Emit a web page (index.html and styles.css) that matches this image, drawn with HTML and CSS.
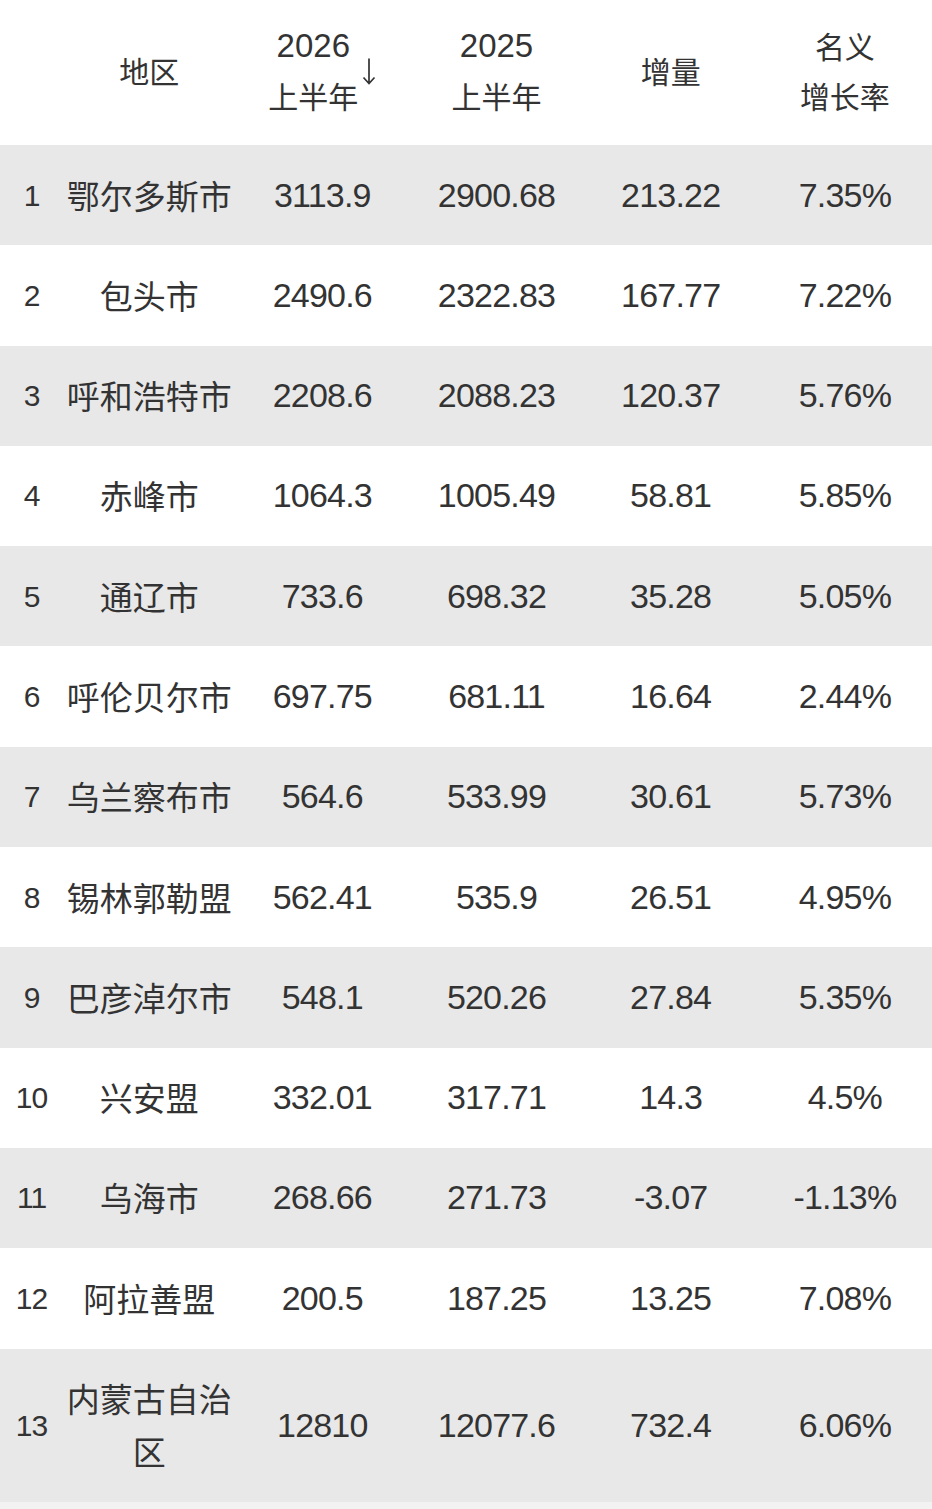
FILE: index.html
```html
<!DOCTYPE html>
<html lang="zh-CN">
<head>
<meta charset="utf-8">
<link rel="stylesheet" href="styles.css">
</head>
<body>
<table class="gdp">
  <colgroup>
    <col class="c-rank"><col class="c-name"><col class="c-num"><col class="c-num"><col class="c-num"><col class="c-num">
  </colgroup>
  <thead>
    <tr>
      <th></th>
      <th>地区</th>
      <th><div class="sort"><span class="hblock"><span class="hnum">2026</span><br>上半年</span><svg class="arrow" width="14" height="27" viewBox="0 0 14 27"><path d="M7 0.5V25.5M1.5 19.5L7 25.5L12.5 19.5" fill="none" stroke="#333" stroke-width="1.7"/></svg></div></th>
      <th><span class="hnum">2025</span><br>上半年</th>
      <th>增量</th>
      <th>名义<br>增长率</th>
    </tr>
  </thead>
  <tbody>
    <tr><td class="rank">1</td><td class="name">鄂尔多斯市</td><td>3113.9</td><td>2900.68</td><td>213.22</td><td>7.35%</td></tr>
    <tr><td class="rank">2</td><td class="name">包头市</td><td>2490.6</td><td>2322.83</td><td>167.77</td><td>7.22%</td></tr>
    <tr><td class="rank">3</td><td class="name">呼和浩特市</td><td>2208.6</td><td>2088.23</td><td>120.37</td><td>5.76%</td></tr>
    <tr><td class="rank">4</td><td class="name">赤峰市</td><td>1064.3</td><td>1005.49</td><td>58.81</td><td>5.85%</td></tr>
    <tr><td class="rank">5</td><td class="name">通辽市</td><td>733.6</td><td>698.32</td><td>35.28</td><td>5.05%</td></tr>
    <tr><td class="rank">6</td><td class="name">呼伦贝尔市</td><td>697.75</td><td>681.11</td><td>16.64</td><td>2.44%</td></tr>
    <tr><td class="rank">7</td><td class="name">乌兰察布市</td><td>564.6</td><td>533.99</td><td>30.61</td><td>5.73%</td></tr>
    <tr><td class="rank">8</td><td class="name">锡林郭勒盟</td><td>562.41</td><td>535.9</td><td>26.51</td><td>4.95%</td></tr>
    <tr><td class="rank">9</td><td class="name">巴彦淖尔市</td><td>548.1</td><td>520.26</td><td>27.84</td><td>5.35%</td></tr>
    <tr><td class="rank">10</td><td class="name">兴安盟</td><td>332.01</td><td>317.71</td><td>14.3</td><td>4.5%</td></tr>
    <tr><td class="rank">11</td><td class="name">乌海市</td><td>268.66</td><td>271.73</td><td>-3.07</td><td>-1.13%</td></tr>
    <tr><td class="rank">12</td><td class="name">阿拉善盟</td><td>200.5</td><td>187.25</td><td>13.25</td><td>7.08%</td></tr>
    <tr><td class="rank">13</td><td class="name">内蒙古自治区</td><td>12810</td><td>12077.6</td><td>732.4</td><td>6.06%</td></tr>
  </tbody>
</table>
</body>
</html>
```

FILE: styles.css
```css
html, body {
  margin: 0;
  padding: 0;
  background: #f2f2f2;
}

.gdp {
  width: 932px;
  border-collapse: collapse;
  table-layout: fixed;
  color: #333333;
  font-family: "Liberation Sans", "Noto Sans CJK SC", sans-serif;
}

.c-rank { width: 63px; }
.c-name { width: 172px; }
.c-num { width: 174px; }

.gdp th {
  background: #ffffff;
  font-weight: normal;
  font-size: 30px;
  line-height: 50px;
  height: 145px;
  padding: 0 0 6px;
  box-sizing: border-box;
  text-align: center;
  vertical-align: middle;
  font-family: "Noto Sans CJK SC", sans-serif;
}

.hnum {
  font-family: "Liberation Sans", sans-serif;
  font-size: 33px;
  line-height: 40px;
  vertical-align: top;
  display: inline-block;
  padding-top: 6px;
}

.sort {
  display: inline-flex;
  align-items: center;
  gap: 4px;
}

.hblock {
  display: block;
}

.arrow {
  display: block;
  margin-top: 4px;
}

.gdp td {
  font-size: 34px;
  line-height: 53.3px;
  padding: 23.5px 0;
  text-align: center;
  vertical-align: middle;
  letter-spacing: -0.8px;
}

.gdp tbody tr:nth-child(odd) td {
  background: #e8e8e8;
}

.gdp tbody tr:nth-child(even) td {
  background: #ffffff;
}

.gdp td.rank {
  font-size: 30px;
  letter-spacing: -1px;
}

.gdp td.name {
  font-family: "Noto Sans CJK SC", sans-serif;
  font-size: 33px;
  letter-spacing: 0;
  padding-left: 2px;
  padding-right: 2px;
}
```
